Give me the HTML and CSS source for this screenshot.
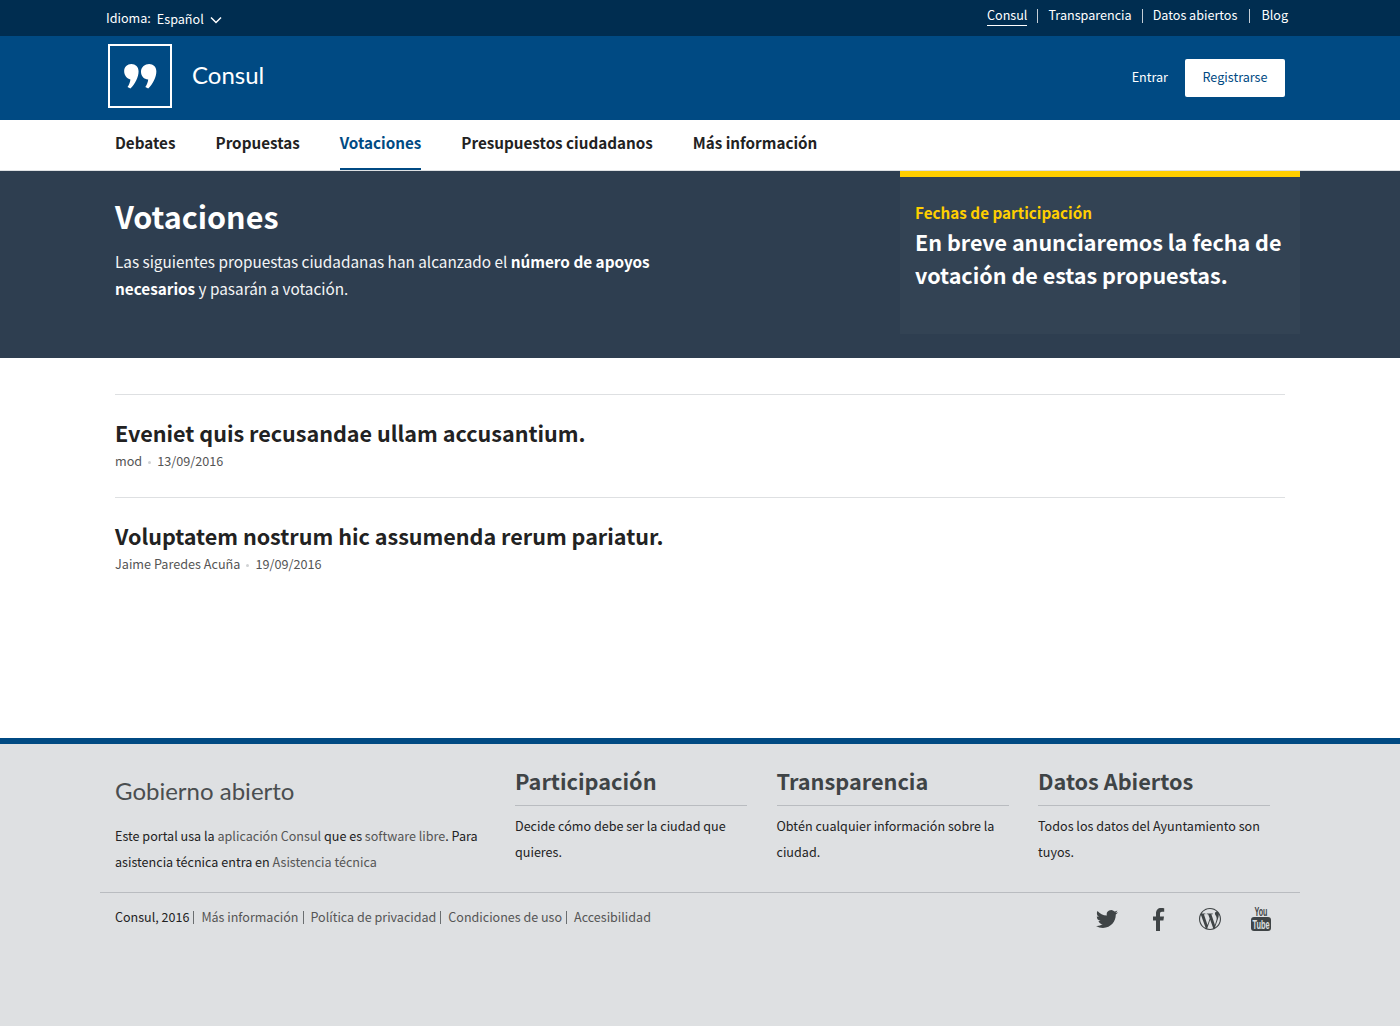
FILE: index.html
```html
<!DOCTYPE html>
<html lang="es">
<head>
<meta charset="utf-8">
<title>Votaciones - Consul</title>
<link rel="stylesheet" href="styles.css">
</head>
<body>
<div class="topbar">
  <div class="lang">
    <span class="lang-label">Idioma:</span>
    <span class="lang-value">Español</span>
    <svg class="chev" width="12" height="8" viewBox="0 0 12 8"><path d="M1 1.500l5 5 5-5" fill="none" stroke="#fff" stroke-width="1.500"/></svg>
  </div>
  <ul class="toplinks">
    <li><a class="current">Consul</a></li>
    <li><a>Transparencia</a></li>
    <li><a>Datos abiertos</a></li>
    <li class="wide"><a>Blog</a></li>
  </ul>
</div>
<header class="masthead">
  <div class="brand">
    <span class="logo">
      <svg width="33" height="25" viewBox="0 0 34 26"><path d="M7.500 0C11.800 0 15 3 15 7.500c0 6-3.500 13-8.500 18l-3-1.500c1.500-2.500 2.800-5 3-8C3.200 15.500 0 12 0 7.500 0 3 3.300 0 7.500 0zM26 0c4.300 0 7.500 3 7.500 7.500 0 6-3.500 13-8.500 18l-3-1.500c1.500-2.500 2.800-5 3-8-4.300 0-7.500-3.500-7.500-8C17.500 3 21.800 0 26 0z" fill="#fff"/></svg>
    </span>
    <span class="brand-name">Consul</span>
  </div>
  <div class="auth">
    <a class="login">Entrar</a>
    <a class="signup">Registrarse</a>
  </div>
</header>
<nav class="mainnav">
  <a>Debates</a>
  <a>Propuestas</a>
  <a class="active">Votaciones</a>
  <a>Presupuestos ciudadanos</a>
  <a>Más información</a>
</nav>
<section class="hero">
  <div class="hero-main">
    <h1>Votaciones</h1>
    <p>Las siguientes propuestas ciudadanas han alcanzado el <strong>número de apoyos necesarios</strong> y pasarán a votación.</p>
  </div>
  <aside class="hero-box">
    <h4>Fechas de participación</h4>
    <p>En breve anunciaremos la fecha de votación de estas propuestas.</p>
  </aside>
</section>
<main class="polls">
  <article class="poll">
    <h3>Eveniet quis recusandae ullam accusantium.</h3>
    <div class="meta"><span>mod</span><i class="dot"></i><span>13/09/2016</span></div>
  </article>
  <article class="poll">
    <h3>Voluptatem nostrum hic assumenda rerum pariatur.</h3>
    <div class="meta"><span>Jaime Paredes Acuña</span><i class="dot"></i><span>19/09/2016</span></div>
  </article>
</main>
<footer class="footer">
  <div class="cols">
    <div class="col-intro">
      <h2>Gobierno abierto</h2>
      <p>Este portal usa la <a>aplicación Consul</a> que es <a>software libre</a>. Para asistencia técnica entra en <a>Asistencia técnica</a></p>
    </div>
    <div class="col">
      <h3>Participación</h3>
      <p>Decide cómo debe ser la ciudad que quieres.</p>
    </div>
    <div class="col">
      <h3>Transparencia</h3>
      <p>Obtén cualquier información sobre la ciudad.</p>
    </div>
    <div class="col">
      <h3>Datos Abiertos</h3>
      <p>Todos los datos del Ayuntamiento son tuyos.</p>
    </div>
  </div>
  <div class="bottom">
    <div class="legal">
      <span>Consul, 2016</span><a>Más información</a><a>Política de privacidad</a><a>Condiciones de uso</a><a class="last">Accesibilidad</a>
    </div>
    <div class="social">
      <svg class="s-tw" width="22" height="22" viewBox="0 0 24 24"><path fill="#3f4446" d="M23.953 4.57a10 10 0 01-2.825.775 4.958 4.958 0 002.163-2.723c-.951.555-2.005.959-3.127 1.184a4.92 4.92 0 00-8.384 4.482C7.69 8.095 4.067 6.13 1.64 3.162a4.822 4.822 0 00-.666 2.475c0 1.71.87 3.213 2.188 4.096a4.904 4.904 0 01-2.228-.616v.06a4.923 4.923 0 003.946 4.827 4.996 4.996 0 01-2.212.085 4.936 4.936 0 004.604 3.417 9.867 9.867 0 01-6.102 2.105c-.39 0-.779-.023-1.17-.067a13.995 13.995 0 007.557 2.209c9.053 0 13.998-7.496 13.998-13.985 0-.21 0-.42-.015-.63A9.935 9.935 0 0024 4.59z"/></svg>
      <svg class="s-fb" width="12" height="23" viewBox="0 0 12 23"><path fill="#3f4446" d="M3 23V12.500H0V8.500h3V5.500C3 2 5 0 8 0c1.500 0 2.800.1 3.200.2v3.600H9c-1.500 0-2 .8-2 2v2.700h4l-.6 4H7V23z"/></svg>
      <svg class="s-wp" width="22" height="22" viewBox="0 0 24 24"><path fill="#3f4446" d="M21.469 6.825c.84 1.537 1.318 3.3 1.318 5.175 0 3.979-2.156 7.456-5.363 9.325l3.295-9.527c.615-1.54.82-2.771.82-3.864 0-.405-.026-.78-.07-1.11m-7.981.105c.647-.03 1.232-.105 1.232-.105.582-.075.514-.93-.067-.899 0 0-1.755.135-2.88.135-1.064 0-2.85-.15-2.85-.15-.585-.03-.661.855-.075.885 0 0 .54.061 1.125.09l1.68 4.605-2.37 7.08L5.354 6.9c.649-.03 1.234-.1 1.234-.1.585-.075.516-.93-.065-.896 0 0-1.746.138-2.874.138-.2 0-.438-.008-.69-.015C4.911 3.15 8.235 1.215 12 1.215c2.809 0 5.365 1.072 7.286 2.833-.046-.003-.091-.009-.141-.009-1.06 0-1.812.923-1.812 1.914 0 .89.513 1.643 1.06 2.531.411.72.89 1.643.89 2.977 0 .915-.354 1.994-.821 3.479l-1.075 3.585-3.9-11.61.001.014zM12 22.784c-1.059 0-2.081-.153-3.048-.437l3.237-9.406 3.315 9.087c.024.053.05.101.078.149-1.12.393-2.325.609-3.582.609M1.211 12c0-1.564.336-3.05.935-4.39L7.29 21.709C3.694 19.96 1.212 16.271 1.211 12M12 0C5.385 0 0 5.385 0 12s5.385 12 12 12 12-5.385 12-12S18.615 0 12 0"/></svg>
      <svg class="s-yt" width="20" height="24" viewBox="0 0 20 24"><text x="10" y="9" text-anchor="middle" class="yt-you" textLength="13" lengthAdjust="spacingAndGlyphs">You</text><rect x="0" y="10" width="20" height="14" rx="3" fill="#3f4446"/><text x="10" y="21.500" text-anchor="middle" class="yt-tube" textLength="17" lengthAdjust="spacingAndGlyphs">Tube</text></svg>
    </div>
  </div>
</footer>
</body>
</html>
```

FILE: styles.css
```css
* { box-sizing: border-box; }
html, body { margin: 0; padding: 0; }
body {
  font-family: "Noto Sans CJK SC", "Noto Sans", sans-serif;
  color: #222;
  background: #fff;
  height: 1026px;
  display: flex;
  flex-direction: column;
  overflow: hidden;
}
a { color: inherit; text-decoration: none; }
h1, h2, h3, h4, p, ul { margin: 0; padding: 0; }

.topbar {
  height: 36px;
  background: #002d50;
  color: #fff;
  display: flex;
  justify-content: space-between;
  padding: 0 112px 0 106px;
  font-size: 12.6px;
}
.lang { display: flex; align-items: center; height: 37px; line-height: 20px; }
.lang-label { margin-top: -1px; }
.lang-value { margin-left: 6px; }
.chev { margin-left: 6px; margin-top: 3px; }
.toplinks { list-style: none; display: flex; padding-top: 5px; line-height: 19px; }
.toplinks li + li { margin-left: 10px; padding-left: 11px; position: relative; }
.toplinks li.wide { margin-left: 12px; padding-left: 12px; }
.toplinks li + li::before {
  content: "";
  position: absolute;
  left: 0;
  top: 4px;
  height: 14px;
  width: 1px;
  background: #c5ced6;
}
.toplinks .current { display: block; border-bottom: 1px solid #fff; height: 21px; }

.masthead {
  height: 84px;
  background: #004a83;
  display: flex;
  justify-content: space-between;
  align-items: flex-start;
  padding: 8px 115px 0 108px;
  color: #fff;
}
.brand { display: flex; align-items: center; }
.logo {
  width: 64px;
  height: 64px;
  border: 2px solid #fff;
  display: flex;
  align-items: center;
  justify-content: center;
}
.brand-name { font-family: Lato, sans-serif; font-size: 24px; margin-left: 20px; line-height: 64px; margin-top: -2px; }
.auth { display: flex; align-items: center; height: 38px; margin-top: 15px; font-size: 12.6px; }
.login { margin-right: 17px; margin-top: -3px; }
.signup {
  width: 100px;
  height: 38px;
  line-height: 35px;
  text-align: center;
  background: #fff;
  color: #004a83;
  border-radius: 2px;
}

.mainnav {
  height: 51px;
  background: #fff;
  border-bottom: 1px solid #dee0e2;
  display: flex;
  gap: 40px;
  padding-left: 115px;
  font-size: 15.23px;
  font-weight: 700;
  color: #222;
}
.mainnav a { display: block; height: 50px; line-height: 44px; }
.mainnav .active { color: #004a83; border-bottom: 2px solid #004a83; }

.hero {
  height: 187px;
  background: #2e3e50;
  color: #fff;
  display: flex;
  justify-content: space-between;
  padding: 0 100px 0 115px;
}
.hero-main { width: 560px; padding-top: 22px; }
.hero h1 { font-size: 30.5px; font-weight: 700; line-height: 46px; }
.hero-main p { font-size: 15.3px; line-height: 27px; margin-top: 9px; color: #f4f5f6; }
.hero-main strong { color: #fff; }
.hero-box {
  width: 400px;
  height: 163px;
  background: #334354;
  border-top: 6px solid #ffcf00;
  padding: 23px 15px 0;
}
.hero-box h4 { font-size: 15.25px; font-weight: 700; color: #ffcf00; line-height: 24px; }
.hero-box p { font-size: 21.52px; font-weight: 700; line-height: 33px; margin-top: 1px; }

.polls { height: 380px; padding: 36px 115px 0; }
.poll { border-top: 1px solid #dee0e2; height: 103px; padding-top: 21px; }
.poll h3 { font-size: 21.55px; font-weight: 700; line-height: 34px; color: #222; }
.meta { font-size: 12.65px; line-height: 20px; color: #555; margin-top: 1px; }
.dot {
  display: inline-block;
  width: 3px;
  height: 3px;
  border-radius: 50%;
  background: #d0d2d4;
  margin: 0 6px;
  vertical-align: 2px;
}

.footer {
  flex: 1;
  background: #dee0e2;
  border-top: 6px solid #004a83;
  padding: 0 100px;
  color: #222;
  font-size: 12.58px;
}
.cols { display: flex; height: 149px; border-bottom: 1px solid #b9bcc0; padding-left: 15px; }
.col-intro { width: 400px; padding-top: 30px; padding-right: 15px; }
.col-intro h2 { font-family: Lato, sans-serif; font-weight: 400; font-size: 24px; line-height: 34px; color: #4a4e50; }
.col-intro p { line-height: 26px; margin-top: 15px; }
.col-intro a, .legal a { color: #555; }
.col { width: 232px; margin-right: 29.500px; padding-top: 20px; }
.col h3 { font-size: 21.7px; font-weight: 700; line-height: 34px; color: #3f4446; padding-bottom: 7px; border-bottom: 1px solid #b9bcc0; }
.col p { line-height: 26px; margin-top: 7px; }
.col:last-child { margin-right: 0; }

.bottom { display: flex; justify-content: space-between; padding: 13px 29px 0 15px; }
.legal { line-height: 22px; font-size: 12.54px; }
.legal span, .legal a { margin-right: 7px; }
.legal span::after, .legal a::after {
  content: "";
  display: inline-block;
  width: 1px;
  height: 13px;
  background: #6a6e70;
  margin-left: 4px;
  vertical-align: -2px;
}
.legal .last::after { display: none; }
.social { display: flex; align-items: center; height: 24px; margin-top: 1px; }
.s-fb { margin-left: 35px; }
.s-wp { margin-left: 34px; }
.s-yt { margin-left: 30px; overflow: visible; }
.yt-you { font-family: "Liberation Sans", sans-serif; font-size: 12px; font-weight: 700; fill: #3f4446; }
.yt-tube { font-family: "Liberation Sans", sans-serif; font-size: 12px; font-weight: 700; fill: #dee0e2; }
```
